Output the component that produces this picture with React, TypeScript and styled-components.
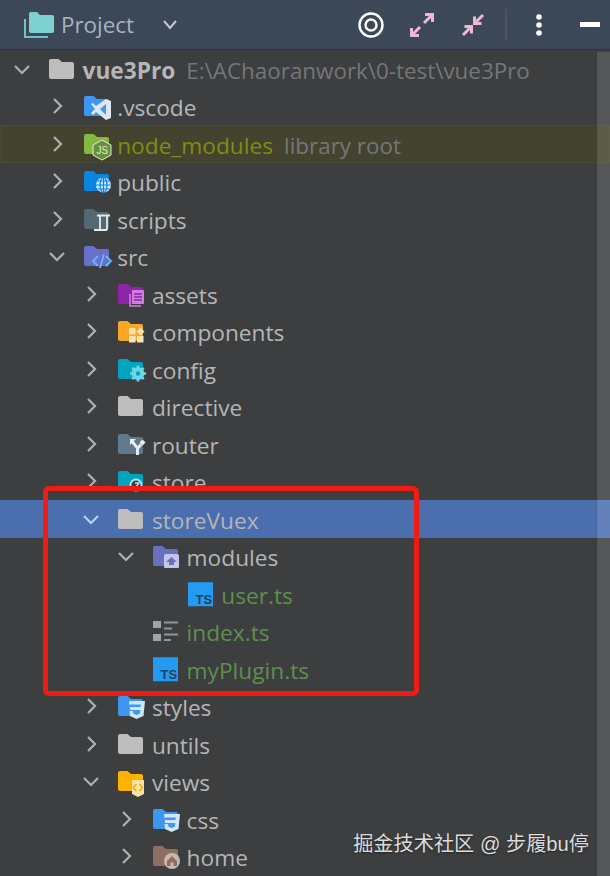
import * as React from "react";
import styled, { createGlobalStyle } from "styled-components";

const GlobalStyle = createGlobalStyle`
  html, body {
    margin: 0;
    padding: 0;
    background: #3c3f41;
  }
`;

const Window = styled.div`
  background: #3d3e40;
  color: #b4b6b7;
  font-family: "Open Sans", "Noto Sans", sans-serif;
  height: 876px;
  overflow: hidden;
  position: relative;
  width: 610px;
`;

const Toolbar = styled.header`
  align-items: center;
  background: #3c4858;
  border-bottom: 1px solid #2f3235;
  box-sizing: border-box;
  display: flex;
  height: 50px;
  padding: 0 10px 0 24px;
`;

const ToolbarTitle = styled.span`
  color: #a7b3bf;
  font-size: 22.4px;
  margin-left: 7px;
`;

const TitleChevron = styled.svg`
  margin-left: 28px;
`;

const ToolbarActions = styled.div`
  align-items: center;
  display: flex;
  margin-left: auto;
`;

const ToolIcon = styled.svg<{ $gap: number }>`
  display: block;
  margin-left: ${(p) => p.$gap}px;
`;

const Divider = styled.div`
  background: #4d565f;
  height: 32px;
  margin-left: 20px;
  width: 2px;
`;

const Tree = styled.div`
  display: flex;
  flex-direction: column;
`;

const Row = styled.div<{ $level: number; $state?: "selected" | "library" }>`
  align-items: center;
  background: ${(p) =>
    p.$state === "selected" ? "#4b6eaf" : p.$state === "library" ? "#44432f" : "transparent"};
  box-shadow: ${(p) => (p.$state === "library" ? "inset 0 0 0 1px #4a4934" : "none")};
  box-sizing: border-box;
  display: flex;
  flex: none;
  height: 37.5px;
  padding-left: ${(p) => 13 + p.$level * 34.7}px;
  white-space: nowrap;
`;

const ChevronSlot = styled.svg`
  flex: none;
  margin-right: 18px;
  width: 18px;
`;

const IconSlot = styled.svg`
  flex: none;
  margin-right: 8.5px;
  overflow: visible;
  width: 25px;
`;

const Label = styled.span<{ $tone?: "green" | "olive"; $bold?: boolean }>`
  color: ${(p) => (p.$tone === "green" ? "#5f8f4c" : p.$tone === "olive" ? "#838c10" : "#b4b6b7")};
  font-size: 22.7px;
  font-weight: ${(p) => (p.$bold ? 700 : 400)};
  line-height: 30px;
  padding-top: 4px;
`;

const Hint = styled.span`
  color: #74777a;
  font-size: 22.4px;
  line-height: 30px;
  margin-left: 11px;
  padding-top: 4px;
`;

const Scrollbar = styled.div`
  background: rgba(255, 255, 255, 0.13);
  bottom: 0;
  box-shadow: -1px 0 0 rgba(0, 0, 0, 0.08);
  position: absolute;
  right: 0;
  top: 52px;
  width: 13px;
`;

const Highlight = styled.div`
  border: 5px solid #ee1c14;
  border-radius: 6px;
  box-sizing: border-box;
  height: 210px;
  left: 43px;
  position: absolute;
  top: 486px;
  width: 376px;
`;

const Watermark = styled.div`
  bottom: 19px;
  color: #dcdcdc;
  font-family: "Liberation Sans", "Noto Sans CJK SC", sans-serif;
  font-size: 20.2px;
  position: absolute;
  right: 21px;
  text-shadow: 0 1px 2px rgba(0, 0, 0, 0.5);
  white-space: nowrap;
`;

const Folder = ({ color }: { color: string }) => (
  <path
    d="M2 0H9.5L13 3H23a2 2 0 0 1 2 2V18a2 2 0 0 1-2 2H2a2 2 0 0 1-2-2V2a2 2 0 0 1 2-2Z"
    fill={color}
  />
);

type IconName =
  | "plain" | "vscode" | "node" | "public" | "scripts" | "src" | "assets" | "components"
  | "config" | "router" | "store" | "modules" | "ts" | "index" | "styles" | "views" | "home";

function Badge({ name }: { name: IconName }) {
  switch (name) {
    case "vscode":
      return (
        <>
          <Folder color="#3f96f2" />
          <path d="M22 3L27 5V22L22 24L12 16L9 19L7 17L11 13L7 8L9 7L12 10Z" fill="#dfe8f2" />
          <path d="M22 8V19L16 13Z" fill="#3f96f2" />
        </>
      );
    case "node":
      return (
        <>
          <Folder color="#86b73e" />
          <path d="M18 6L27 11V21L18 26L9 21V11Z" fill="#64913a" stroke="#e4ead8" strokeWidth="1" />
          <text x="12.5" y="20" fontSize="10" fill="#e4ead8" fontFamily="Liberation Sans">JS</text>
        </>
      );
    case "public":
      return (
        <>
          <Folder color="#0785e2" />
          <circle cx="19.5" cy="14" r="7.5" fill="#cfeafd" />
          <path d="M12 14H27M19.5 6.5V21.5M13.5 10H25.5M13.5 18H25.5" stroke="#0785e2" strokeWidth="1.2" />
          <ellipse cx="19.5" cy="14" rx="3.5" ry="7.5" fill="none" stroke="#0785e2" strokeWidth="1.2" />
        </>
      );
    case "scripts":
      return (
        <>
          <Folder color="#546873" />
          <path d="M13 6.5H26M16 6.5V21M23 6.5V21M10 21H23" fill="none" stroke="#e6eaec" strokeWidth="1.8" />
        </>
      );
    case "src":
      return (
        <>
          <Folder color="#6a6fcb" />
          <path d="M14 10L9 15L14 20M22 10L27 15L22 20" fill="none" stroke="#63b8ff" strokeWidth="1.8" />
          <path d="M20 8L16 22" stroke="#63b8ff" strokeWidth="1.8" />
        </>
      );
    case "assets":
      return (
        <>
          <Folder color="#8e24aa" />
          <rect x="14" y="6" width="12" height="14" rx="1" fill="#cc7fdd" />
          <path d="M16 10H24M16 13H24M16 16H24" stroke="#8e24aa" strokeWidth="1.4" />
          <path d="M12 10V22H23" fill="none" stroke="#cc7fdd" strokeWidth="1.6" />
        </>
      );
    case "components":
      return (
        <>
          <Folder color="#f8a625" />
          <rect x="11" y="7" width="6.5" height="6.5" fill="#fde3b4" />
          <rect x="11" y="15" width="6.5" height="6.5" fill="#fde3b4" />
          <rect x="19" y="15" width="6.5" height="6.5" fill="#fde3b4" />
          <path d="M22.5 6.5L26.5 10.5L22.5 14.5L18.5 10.5Z" fill="#fde3b4" />
        </>
      );
    case "config":
      return (
        <>
          <Folder color="#00a3c0" />
          <circle cx="20" cy="14.5" r="4.3" fill="none" stroke="#6fd5e8" strokeWidth="4.2" />
          <path
            d="M20 6.5V10M20 19V22.5M12 14.5H15.5M24.5 14.5H28M14.3 8.8L16.8 11.3M23.2 17.7L25.7 20.2M14.3 20.2L16.8 17.7M23.2 11.3L25.7 8.8"
            stroke="#6fd5e8"
            strokeWidth="2.6"
          />
        </>
      );
    case "router":
      return (
        <>
          <Folder color="#5f7a8e" />
          <path d="M19.5 21V14L14.5 8" fill="none" stroke="#eef1f3" strokeWidth="2.8" />
          <path d="M19.5 14.5L23 10.5" fill="none" stroke="#eef1f3" strokeWidth="2.8" />
          <path d="M12 5H18L12 11Z" fill="#eef1f3" />
          <path d="M24.5 5.5L27.5 8.5L24.5 11.5L21.5 8.5Z" fill="#eef1f3" />
        </>
      );
    case "store":
      return (
        <>
          <Folder color="#00a3c0" />
          <circle cx="18" cy="14" r="5.5" fill="#3d3e40" stroke="#a9ecf7" strokeWidth="1.8" />
          <path d="M17 12H21L18 16" fill="none" stroke="#a9ecf7" strokeWidth="1.4" />
        </>
      );
    case "modules":
      return (
        <>
          <Folder color="#6a6fc0" />
          <path d="M13 8H24a2 2 0 0 1 2 2V21a1 1 0 0 1-1 1H12a1 1 0 0 1-1-1V10a2 2 0 0 1 2-2Z" fill="#c3c5ea" />
          <path d="M18.5 11L24 16H21V19H16V16H13Z" fill="#6a6fc0" />
        </>
      );
    case "ts":
      return (
        <>
          <rect x="0" y="-1.75" width="25" height="24" fill="#249bf2" />
          <text x="7.5" y="19.5" fontSize="13" fontWeight="700" fill="#1f3f5c" fontFamily="Liberation Sans">TS</text>
        </>
      );
    case "index":
      return (
        <>
          <rect x="0" y="0" width="8" height="7" fill="#9ea4a8" />
          <rect x="0" y="13" width="8" height="7" fill="#9ea4a8" />
          <path d="M11 1.5H25M11 7.5H19M11 13.5H25M11 19H18" stroke="#8f9599" strokeWidth="2" />
        </>
      );
    case "styles":
      return (
        <>
          <Folder color="#3f96f2" />
          <path d="M11 5H27L25.5 20L18.5 23L12 20L11.5 15H15L15.3 17.5L18.5 19L22 17.5L22.3 14H12L11.7 11H22.5L22.8 8.5H11.3Z" fill="#cfe6fc" />
        </>
      );
    case "views":
      return (
        <>
          <Folder color="#fdb200" />
          <path d="M14 9H26V23L20 26L14 23Z" fill="#fde2a6" />
          <path d="M18.5 13L15.5 16.5L18.5 20M21.5 13L24.5 16.5L21.5 20" fill="none" stroke="#f5a800" strokeWidth="1.4" />
        </>
      );
    case "home":
      return (
        <>
          <Folder color="#8d6e63" />
          <circle cx="19" cy="15" r="8" fill="#cbb7af" />
          <path d="M19 10L24 15V20H20.5V16.5H17.5V20H14V15Z" fill="#8d6e63" />
        </>
      );
    default:
      return <Folder color="#bdbdbd" />;
  }
}

interface Item {
  level: number;
  icon: IconName;
  name: string;
  open?: boolean;
  leaf?: boolean;
  tone?: "green" | "olive";
  hint?: string;
  bold?: boolean;
  state?: "selected" | "library";
}

const items: Item[] = [
  { level: 0, icon: "plain", name: "vue3Pro", open: true, bold: true, hint: "E:\\AChaoranwork\\0-test\\vue3Pro" },
  { level: 1, icon: "vscode", name: ".vscode" },
  { level: 1, icon: "node", name: "node_modules", tone: "olive", hint: "library root", state: "library" },
  { level: 1, icon: "public", name: "public" },
  { level: 1, icon: "scripts", name: "scripts" },
  { level: 1, icon: "src", name: "src", open: true },
  { level: 2, icon: "assets", name: "assets" },
  { level: 2, icon: "components", name: "components" },
  { level: 2, icon: "config", name: "config" },
  { level: 2, icon: "plain", name: "directive" },
  { level: 2, icon: "router", name: "router" },
  { level: 2, icon: "store", name: "store" },
  { level: 2, icon: "plain", name: "storeVuex", open: true, state: "selected" },
  { level: 3, icon: "modules", name: "modules", open: true },
  { level: 4, icon: "ts", name: "user.ts", leaf: true, tone: "green" },
  { level: 3, icon: "index", name: "index.ts", leaf: true, tone: "green" },
  { level: 3, icon: "ts", name: "myPlugin.ts", leaf: true, tone: "green" },
  { level: 2, icon: "styles", name: "styles" },
  { level: 2, icon: "plain", name: "untils" },
  { level: 2, icon: "views", name: "views", open: true },
  { level: 3, icon: "styles", name: "css" },
  { level: 3, icon: "home", name: "home" },
];

function TreeRow({ item }: { item: Item }) {
  const selected = item.state === "selected";
  return (
    <Row $level={item.level} $state={item.state}>
      <ChevronSlot width="18" height="18" viewBox="0 0 18 18">
        {!item.leaf &&
          (item.open ? (
            <path d="M2 6L9 13L16 6" fill="none" stroke={selected ? "#b9d3f2" : "#aeb0b1"} strokeWidth="2.2" />
          ) : (
            <path d="M6 2L13 9L6 16" fill="none" stroke="#aeb0b1" strokeWidth="2.2" />
          ))}
      </ChevronSlot>
      <IconSlot height="20" viewBox="0 0 25 20">
        <Badge name={item.icon} />
      </IconSlot>
      <Label $tone={item.tone} $bold={item.bold}>{item.name}</Label>
      {item.hint && <Hint>{item.hint}</Hint>}
    </Row>
  );
}

export default function App() {
  return (
    <Window>
      <GlobalStyle />
      <Toolbar>
        <svg width="30" height="26" viewBox="0 0 30 26">
          <path d="M1 7V25H24" fill="none" stroke="#6fc4c4" strokeWidth="2" />
          <path
            d="M5 2a2 2 0 0 1 2-2H13L16 3H28a2 2 0 0 1 2 2V19a2 2 0 0 1-2 2H7a2 2 0 0 1-2-2Z"
            fill="#7fd0d0"
          />
        </svg>
        <ToolbarTitle>Project</ToolbarTitle>
        <TitleChevron width="16" height="12" viewBox="0 0 16 12">
          <path d="M2 2L8 9L14 2" fill="none" stroke="#c2cad2" strokeWidth="2" />
        </TitleChevron>
        <ToolbarActions>
          <ToolIcon $gap={0} width="26" height="26" viewBox="0 0 26 26">
            <circle cx="13" cy="13" r="11.5" fill="none" stroke="#fff" strokeWidth="2.4" />
            <circle cx="13" cy="13" r="5.5" fill="none" stroke="#fff" strokeWidth="2.4" />
          </ToolIcon>
          <ToolIcon $gap={26} width="24" height="24" viewBox="0 0 24 24">
            <path
              d="M15 1.5H22.5V9M22 2L14 10M1.5 15V22.5H9M2 22L10 14"
              fill="none"
              stroke="#f0b6d8"
              strokeWidth="3"
            />
          </ToolIcon>
          <ToolIcon $gap={27} width="24" height="24" viewBox="0 0 24 24">
            <path
              d="M13.5 3.5V10.5H20.5M14 10L22 2M3.5 13.5H10.5V20.5M10 14L2 22"
              fill="none"
              stroke="#f0b6d8"
              strokeWidth="3"
            />
          </ToolIcon>
          <Divider />
          <ToolIcon $gap={28} width="8" height="24" viewBox="0 0 8 24">
            <circle cx="4" cy="4" r="2.8" fill="#fff" />
            <circle cx="4" cy="12" r="2.8" fill="#fff" />
            <circle cx="4" cy="20" r="2.8" fill="#fff" />
          </ToolIcon>
          <ToolIcon $gap={37} width="20" height="5" viewBox="0 0 20 5">
            <rect width="20" height="5" fill="#fff" />
          </ToolIcon>
        </ToolbarActions>
      </Toolbar>
      <Tree>
        {items.map((item) => (
          <TreeRow key={item.name + item.level} item={item} />
        ))}
      </Tree>
      <Scrollbar />
      <Highlight />
      <Watermark>掘金技术社区 @ 步履bu停</Watermark>
    </Window>
  );
}
